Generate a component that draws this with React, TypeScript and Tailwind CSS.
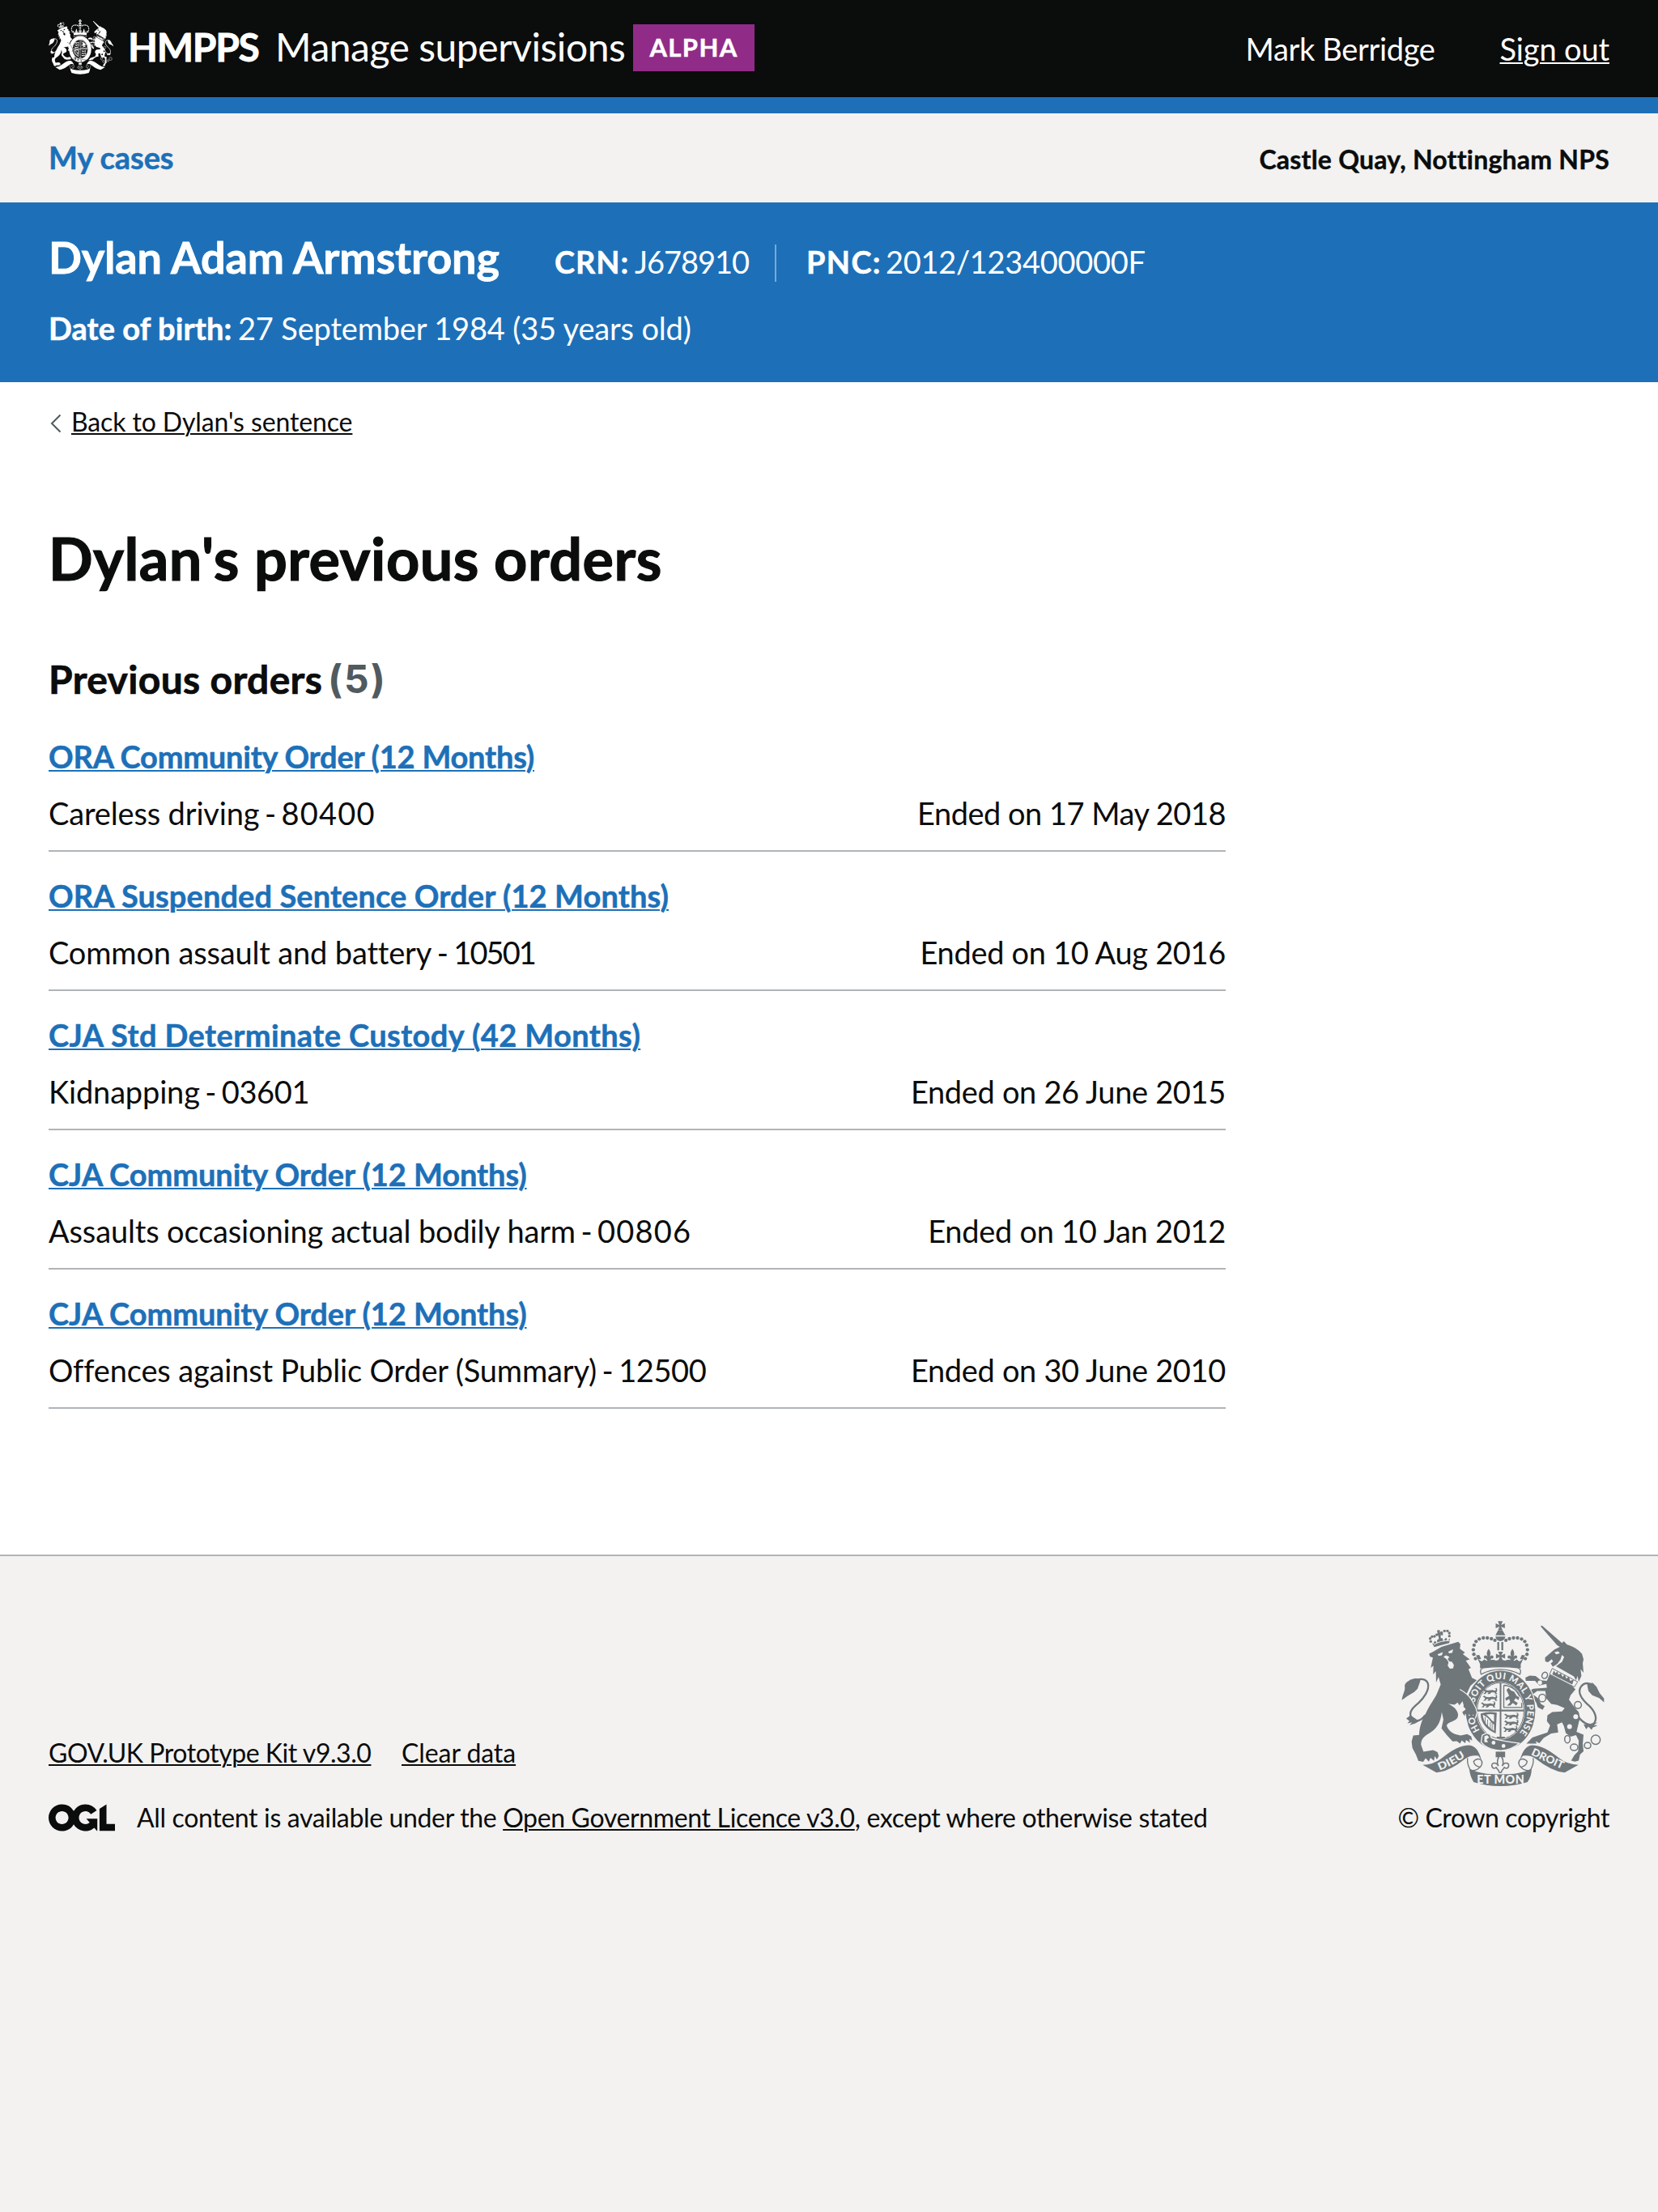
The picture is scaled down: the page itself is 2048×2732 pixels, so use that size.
import React from "react";

const orders = [
  { title: "ORA Community Order (12 Months)", titleTracking: "tracking-[-0.23px]", offence: "Careless driving", code: "80400", codeTracking: "tracking-[1.2px]", ended: "Ended on 17 May 2018", endedTracking: "tracking-[-0.5px]" },
  { title: "ORA Suspended Sentence Order (12 Months)", titleTracking: "tracking-[0.1px]", offence: "Common assault and battery", code: "10501", codeTracking: "tracking-[-1.9px]", ended: "Ended on 10 Aug 2016", endedTracking: "tracking-[-0.33px]" },
  { title: "CJA Std Determinate Custody (42 Months)", titleTracking: "tracking-[0.4px]", offence: "Kidnapping", code: "03601", codeTracking: "tracking-[-0.4px]", ended: "Ended on 26 June 2015", endedTracking: "tracking-[-0.33px]" },
  { title: "CJA Community Order (12 Months)", titleTracking: "tracking-[-0.08px]", offence: "Assaults occasioning actual bodily harm", code: "00806", codeTracking: "tracking-[1.2px]", ended: "Ended on 10 Jan 2012", endedTracking: "tracking-[-0.28px]" },
  { title: "CJA Community Order (12 Months)", titleTracking: "tracking-[-0.08px]", offence: "Offences against Public Order (Summary)", code: "12500", codeTracking: "tracking-[-0.4px]", ended: "Ended on 30 June 2010", endedTracking: "tracking-[-0.33px]" },
];

const archBeads = [
  [369, 204], [363, 188], [361, 171], [364, 154], [371, 140], [383, 131], [398, 127], [413, 127], [428, 130], [441, 136],
];

const lionCrownBeads = [
  [203, 140], [201, 129], [208, 122], [217, 121], [243, 107], [254, 101], [265, 101], [272, 109], [272, 120],
];

function Fleur({ x, y }: { x: number; y: number }) {
  return (
    <path
      transform={`translate(${x} ${y})`}
      d="M0 -20C9 -8 8 2 3 10C8 2 17 2 18 10C18 16 12 18 9 14C10 20 4 20 4 24H-4C-4 20 -10 20 -9 14C-12 18 -18 16 -18 10C-17 2 -8 2 -3 10C-8 2 -9 -8 0 -20Z"
    />
  );
}

function CrossPattee({ x, y }: { x: number; y: number }) {
  return <path transform={`translate(${x} ${y})`} d="M-9 -17H9L3 -3L17 -9V9L3 3L9 17H-9L-3 3L-17 9V-9L-3 -3Z" />;
}

function PassantLion({ x, y }: { x: number; y: number }) {
  return (
    <path
      transform={`translate(${x} ${y})`}
      d="M-28 -6L-22 -10L-16 -5L-6 -4L8 -6L18 -3L22 -10L14 -12L24 -13L26 -4L22 4L27 9H18L16 3L4 3L-2 9H-11L-6 3L-14 3L-18 9H-26L-19 2L-22 -3Z"
    />
  );
}

function RoyalArms({ className, bg, motto }: { className: string; bg: string; motto: boolean }) {
  return (
    <svg className={className} viewBox="94 64 754 616" preserveAspectRatio="none" fill="currentColor" aria-hidden="true">
      {/* lion */}
      <path d="M197 186L212 178L243 160L305 141L313 150L311 167L330 181L322 187L348 207L333 211L352 238L343 243L356 275L374 284L350 305L336 335L352 352L368 384L367 412L356 424L350 408L344 421L337 408L329 417L322 404L333 392L324 382L331 370L321 362L309 377L303 367L291 375L268 371C298 386 310 406 302 424C292 438 268 438 262 452C268 474 288 486 314 489L338 484L353 492L357 508L346 502L349 516L334 506L331 518L318 507L312 519L300 510L284 511L262 487L243 463L250 430L244 402C240 440 226 462 205 476C180 492 167 500 167 524L176 549L212 543L228 551L233 565L226 578L218 566L215 583L202 572L196 586L184 573L175 587L157 583L148 560L135 536L132 512L138 489L160 487C160 460 170 430 186 404C194 385 214 356 224 338L240 300L232 272L223 292L222 250L212 262L213 230L203 238L211 200L200 196Z" />
      <path d="M182 414C164 442 140 438 130 420C120 400 140 384 156 370C178 350 198 320 193 298C188 280 172 276 148 284" fill="none" stroke="currentColor" strokeWidth="7" />
      <path d="M164 280C150 275 140 278 128 282C112 292 104 298 107 310C108 326 97 340 96 358L118 342L142 328L154 316L164 288ZM128 414L112 426L124 436L116 444L134 440L124 451L146 444L160 436Z" />
      <path d="M228 188L248 180L244 192L232 193ZM268 178L286 169L283 182L271 184ZM250 197L260 192L272 197L266 206L272 214L282 216L289 228L286 240L274 241L266 230L269 217L262 206Z" fill={bg} />
      <path d="M208 146L216 161L272 146L274 128L264 140L262 126L255 130L252 142L246 128L240 128V116L248 118V108L238 110L236 97L226 99L229 110L220 112L223 121L231 118L233 131L226 135L228 149L220 138L214 142L216 150Z" />
      <path d="M214 152Q240 136 273 137" fill="none" stroke={bg} strokeWidth="3" />
      {lionCrownBeads.map(([x, y]) => (
        <circle key={`${x}-${y}`} cx={x} cy={y} r="5" />
      ))}

      {/* unicorn */}
      <path d="M612 81L617 82L690 146L697 139L708 151L724 157L738 164L752 174L764 186L770 206L767 222L770 256L759 243L762 268L752 290L748 268L742 284L734 270L668 232L690 216L698 198L690 190L684 208L672 224L656 234L648 222L657 214L652 206L638 217L628 214L627 200L648 182L662 170L682 160L672 154L612 86Z" />
      <path d="M662 180L676 177L682 184L668 188Z" fill={bg} />
      <path d="M644 262L660 266L728 306L740 318L722 340L716 356L736 384L752 402L757 424L752 442L744 476L770 486L767 520L770 548L757 560L752 582L738 586L724 582L736 562L750 548L752 508L742 488L722 494L704 480L697 454L690 440L672 448L676 478L650 482L622 498L606 518L592 510L596 519H558L580 497L606 488L636 478L646 452L634 436L636 414L654 402L690 400L700 388L672 376L650 372L632 352L628 324L598 324L582 336L602 352L612 372L626 380L618 394L600 384L594 366L566 340L562 326L584 316L634 312L632 298L606 304L590 286L556 286L554 274L570 267L592 268L612 284L634 286Z" />
      <path d="M654 240L748 290L736 309L644 262Z" fill={bg} stroke="currentColor" strokeWidth="3" />
      <path d="M654 262L660 248L666 258L674 250L676 264L686 258L692 272L700 262L706 278L716 270L720 286L734 282L728 300Z" />
      <path d="M746 414C764 440 790 456 806 446C824 430 814 402 792 380C766 358 748 334 758 312C768 294 784 292 800 300" fill="none" stroke="currentColor" strokeWidth="7" />
      <path d="M784 296L804 294L818 308L830 332L846 352V366L828 350L802 340L788 324L784 304ZM822 440L808 450L822 452L804 460L800 468L788 456L780 466L770 448L790 446Z" />
      <g fill={bg}>
        <circle cx="608" cy="293" r="8" />
        <circle cx="741" cy="419" r="9" />
        <circle cx="718" cy="456" r="9" />
      </g>
      <g fill={bg} stroke="currentColor" strokeWidth="4.5">
        <ellipse cx="626" cy="266" rx="10" ry="12" transform="rotate(25 626 266)" />
        <ellipse cx="617" cy="350" rx="13" ry="14" />
        <circle cx="749" cy="376" r="13" />
        <ellipse cx="710" cy="503" rx="10" ry="14" />
        <ellipse cx="735" cy="533" rx="14" ry="12" />
        <ellipse cx="785" cy="526" rx="12" ry="11" />
        <circle cx="815" cy="505" r="17" />
      </g>

      {/* garter and shield */}
      <ellipse cx="462" cy="398" rx="133" ry="152" fill={bg} />
      <ellipse cx="462" cy="397" rx="129" ry="148" />
      <ellipse cx="462" cy="397" rx="90" ry="107" fill={bg} />
      <ellipse cx="462" cy="397" rx="87" ry="104" fill="none" stroke="currentColor" strokeWidth="3" />
      <path d="M459 292H465V393H549V400H465V494L478 494V500H448V494L459 494V400H375V393H459Z" />
      <PassantLion x={424} y={326} />
      <PassantLion x={424} y={351} />
      <PassantLion x={417} y={376} />
      <PassantLion x={503} y={418} />
      <PassantLion x={503} y={443} />
      <PassantLion x={499} y={467} />
      <path d="M474 303V385H541L540 368M474 303Q515 305 533 345" fill="none" stroke="currentColor" strokeWidth="4" />
      <path d="M484 320L492 312L500 322L512 326L522 342L532 348L528 358L518 350L512 360L526 368L520 378L508 368L498 378H486L498 366L494 354L482 360L480 350L494 342Z" />
      <path d="M388 408Q414 398 448 404L444 482C412 466 390 448 388 408ZM396 412C398 440 416 458 438 472V448C426 446 424 424 396 412ZM408 412C424 422 428 436 438 438V411Q424 408 408 412Z" fillRule="evenodd" />
      <path d="M405 420V444M414 430V456M424 440V464M431 446V468" stroke="currentColor" strokeWidth="2.5" />
      <path d="M394 488L410 480L424 486L428 498C450 508 490 512 532 518Q500 545 462 545Q425 542 402 526L390 514Z" stroke={bg} strokeWidth="4" />
      <path d="M402 492L412 488L420 496L410 504L416 514L402 514Z" fill={bg} />
      <circle cx="436" cy="516" r="7" fill={bg} />
      <circle cx="473" cy="528" r="7" fill={bg} />

      {motto && (
        <g fill={bg} fontFamily="Lato, sans-serif" fontWeight="900">
          <defs>
            <path id="garter" d="M385 470A99 117 0 1 1 522 490" />
          </defs>
          <text fontSize="34">
            <textPath href="#garter" textLength="506" lengthAdjust="spacing">HONI SOIT QUI MAL Y PENSE</textPath>
          </text>
        </g>
      )}

      {/* lion's foreleg, resting on the garter */}
      <path d="M311 318Q340 334 354 356L369 386L374 404L368 424L360 410L354 424L346 410L338 422L332 408L326 414L320 402L333 392L326 380L318 350Z" />
      <path d="M311 318Q340 334 354 356L370 386L375 404L368 426" fill="none" stroke={bg} strokeWidth="3.5" />

      {/* crown */}
      <CrossPattee x={461} y={82} />
      <path d="M452 100H470L480 117H443ZM443 122H480Q476 139 461 139Q447 139 443 122Z" />
      <path d="M450 142H457V173H450ZM465 142H472V173H465Z" />
      {archBeads.map(([x, y]) => (
        <React.Fragment key={`${x}-${y}`}>
          <circle cx={x} cy={y} r="6.5" />
          <circle cx={923 - x} cy={y} r="6.5" />
        </React.Fragment>
      ))}
      <CrossPattee x={462} y={195} />
      <Fleur x={418} y={188} />
      <Fleur x={506} y={188} />
      <path d="M371 192L383 190L390 205L380 207L392 214L402 207L410 212Q436 205 445 211L462 207L479 211Q488 205 514 212L522 207L532 214L544 207L534 205L541 190L553 192L537 224V240Q462 228 386 240V224Z" />
      <path d="M398 238Q462 230 526 238Q542 244 534 262Q500 244 462 244Q424 244 390 262Q382 244 398 238Z" fill={bg} stroke="currentColor" strokeWidth="4" />

      {/* ribbon */}
      <path d="M173 598Q214 598 246 572Q300 526 346 525Q378 528 391 580L380 564Q350 560 330 576Q272 622 224 627Z" />
      <path d="M751 598Q710 598 678 572Q624 526 578 525Q548 528 534 580L545 564Q574 560 594 576Q652 622 700 627Z" />
      <path d="M340 573Q336 590 349 616Q358 622 374 616Q404 596 388 578Q372 572 362 586Q366 604 386 606" fill="none" stroke="currentColor" strokeWidth="4" />
      <path d="M583 573Q587 590 574 616Q565 622 549 616Q519 596 535 578Q551 572 561 586Q557 604 537 606" fill="none" stroke="currentColor" strokeWidth="4" />
      <path d="M346 612Q370 626 410 631Q462 636 514 631Q554 626 577 612Q578 640 562 662Q515 677 461 677Q407 677 362 662Q348 640 346 612Z" />
      <path d="M444 549H479V570H444Z" />
      <g transform="translate(461 592) scale(1.75)" fill={bg} stroke="currentColor" strokeWidth="2.6">
        <path d="M0 -17C8 -8 7 0 4 6C8 -3 18 -2 18 5C17 12 11 12 8 8C9 13 3 13 3 17A3 3 0 1 1 -3 17C-3 13 -9 13 -8 8C-11 12 -17 12 -18 5C-18 -2 -8 -3 -4 6C-7 0 -8 -8 0 -17Z" />
      </g>
      {motto && (
        <g fill={bg} fontFamily="Lato, sans-serif" fontWeight="900">
          <defs>
            <path id="ribbon-left" d="M236 619Q290 598 344 560" />
            <path id="ribbon-right" d="M574 560Q634 588 700 618" />
          </defs>
          <text fontSize="39">
            <textPath href="#ribbon-left" textLength="108" lengthAdjust="spacingAndGlyphs">DIEU</textPath>
          </text>
          <text fontSize="39">
            <textPath href="#ribbon-right" textLength="128" lengthAdjust="spacingAndGlyphs">DROIT</textPath>
          </text>
          <text x="374" y="667" fontSize="43" textLength="176">ET MON</text>
        </g>
      )}
    </svg>
  );
}

function OglLogo() {
  return (
    <svg className="h-[34px] w-[82px]" viewBox="0 0 483.2 195.7" fill="currentColor" role="img" aria-label="OGL">
      <path d="M421.5 142.8V.1l-50.7 32.3v161.1h112.4v-50.7zm-122.3-9.6A47.12 47.12 0 0 1 221 97.8c0-26 21.1-47.1 47.1-47.1 16.7 0 31.4 8.7 39.7 21.8l42.7-27.2A97.63 97.63 0 0 0 268.1 0c-36.5 0-68.3 20.1-85.1 49.7A98 98 0 0 0 97.8 0C43.9 0 0 43.9 0 97.8s43.9 97.8 97.8 97.8c36.5 0 68.3-20.1 85.1-49.7a97.76 97.76 0 0 0 149.6 25.4l19.4 22.2h3v-87.8h-80l24.3 27.5zM97.8 145c-26 0-47.1-21.1-47.1-47.1s21.1-47.1 47.1-47.1 47.1 21.1 47.1 47.1S123.8 145 97.8 145" />
    </svg>
  );
}

export default function App() {
  return (
    <div className="flex h-[2732px] w-[2048px] flex-col whitespace-nowrap bg-white font-['Lato',sans-serif] text-[38px] leading-[40px] text-[#0b0c0c]">
      <header className="flex h-[140px] items-start justify-between border-b-[20px] border-[#1d70b8] bg-[#0b0c0c] px-[60px] text-white">
        <div className="flex items-start text-[48px] leading-[60px]">
          <RoyalArms className="mt-[24px] h-[68px] w-[80px]" bg="#0b0c0c" motto={false} />
          <span className="mt-[28px] ml-[18px] w-[182px] font-bold tracking-[-1.3px] [-webkit-text-stroke:0.8px]">HMPPS</span>
          <span className="mt-[28px] w-[442px] tracking-[-0.47px]">Manage supervisions</span>
          <strong className="mt-[30px] h-[58px] w-[150px] bg-[#912b88] text-center text-[31px] leading-[57px] font-bold tracking-[1.4px] [-webkit-text-stroke:0.5px]">ALPHA</strong>
        </div>
        <nav className="mt-[30px] flex gap-[80px] leading-[60px]">
          <span className="tracking-[-0.34px]">Mark Berridge</span>
          <a className="tracking-[-0.14px] underline decoration-2 underline-offset-2">Sign out</a>
        </nav>
      </header>

      <nav className="flex h-[110px] items-start justify-between bg-[#f3f2f1] px-[60px] font-bold">
        <a className="mt-[34px] tracking-[-0.08px] text-[#1d70b8] [-webkit-text-stroke:0.5px]">My cases</a>
        <span className="mt-[37px] text-[32px] tracking-[0.22px] [-webkit-text-stroke:0.4px]">Castle Quay, Nottingham NPS</span>
      </nav>

      <section className="h-[222px] bg-[#1d70b8] px-[60px] pt-[38px] text-white">
        <div className="flex items-baseline">
          <h2 className="w-[625px] text-[54px] leading-[60px] font-bold tracking-[-0.13px] [-webkit-text-stroke:0.8px]">Dylan Adam Armstrong</h2>
          <div className="flex w-[274px] border-r-2 border-[#77a9d4] pb-[4px] leading-[42px]">
            <strong className="w-[99px] tracking-[0.9px] [-webkit-text-stroke:0.5px]">CRN:</strong>
            <span className="tracking-[-1.04px]">J678910</span>
          </div>
          <div className="ml-[37px] flex leading-[42px]">
            <strong className="w-[98px] tracking-[1.3px] [-webkit-text-stroke:0.5px]">PNC:</strong>
            <span className="tracking-[-0.3px]">2012/123400000F</span>
          </div>
        </div>
        <div className="mt-[37px] flex">
          <strong className="w-[234px] tracking-[0.08px] [-webkit-text-stroke:0.5px]">Date of birth:</strong>
          <span className="tracking-[-0.17px]">27 September 1984 (35 years old)</span>
        </div>
      </section>

      <main className="flex-1 px-[60px] pt-[29px]">
        <a className="flex items-center text-[32px]">
          <svg className="mt-[4px] ml-[2px] h-[24px] w-[14px] text-[#505a5f]" viewBox="0 0 14 24" fill="none" stroke="currentColor" strokeWidth="2">
            <path d="M12.5 1.5L2 12L12.5 22.5" />
          </svg>
          <span className="ml-[12px] tracking-[-0.12px] underline decoration-2 underline-offset-2">Back to Dylan's sentence</span>
        </a>

        <h1 className="mt-[108px] text-[72px] leading-[80px] font-bold tracking-[0.5px] [-webkit-text-stroke:1.2px]">Dylan's previous orders</h1>

        <h2 className="mt-[80px] flex text-[48px] leading-[60px] font-bold">
          <span className="w-[345px] tracking-[0.34px] [-webkit-text-stroke:0.7px]">Previous orders</span>
          <span className="font-['Inter',sans-serif] tracking-[2px] text-[#505a5f]">(5)</span>
        </h2>

        <ul className="mt-[11px] w-[1454px]">
          {orders.map((order, i) => (
            <li key={i} className="border-b-2 border-[#b1b4b6] pt-[34px] pb-[26px]">
              <h3 className="font-bold text-[#1d70b8] [-webkit-text-stroke:0.5px]">
                <a className={`underline decoration-2 underline-offset-2 ${order.titleTracking}`}>{order.title}</a>
              </h3>
              <div className="mt-[30px] flex justify-between">
                <span className="tracking-[-0.16px]">
                  {order.offence}
                  <span className="[word-spacing:-3px]"> - </span>
                  <span className={order.codeTracking}>{order.code}</span>
                </span>
                <span className={order.endedTracking}>{order.ended}</span>
              </div>
            </li>
          ))}
        </ul>
      </main>

      <footer className="h-[812px] border-t-2 border-[#b1b4b6] bg-[#f3f2f1] px-[60px] text-[32px]">
        <div className="flex h-[343px] items-end justify-between">
          <div className="flex flex-col gap-[40px]">
            <div className="flex">
              <div className="w-[436px]">
                <a className="tracking-[-0.45px] underline decoration-2 underline-offset-2">GOV.UK Prototype Kit v9.3.0</a>
              </div>
              <a className="tracking-[-0.08px] underline decoration-2 underline-offset-2">Clear data</a>
            </div>
            <div className="flex items-center">
              <OglLogo />
              <p className="ml-[27px] tracking-[-0.35px]">
                All content is available under the{" "}
                <a className="underline decoration-2 underline-offset-2">Open Government Licence v3.0</a>, except where otherwise stated
              </p>
            </div>
          </div>
          <div className="flex flex-col items-end">
            <RoyalArms className="mr-[6px] h-[205px] w-[251px] text-[#6f777b]" bg="#f3f2f1" motto />
            <span className="mt-[18px] tracking-[-0.4px]">© Crown copyright</span>
          </div>
        </div>
      </footer>
    </div>
  );
}
